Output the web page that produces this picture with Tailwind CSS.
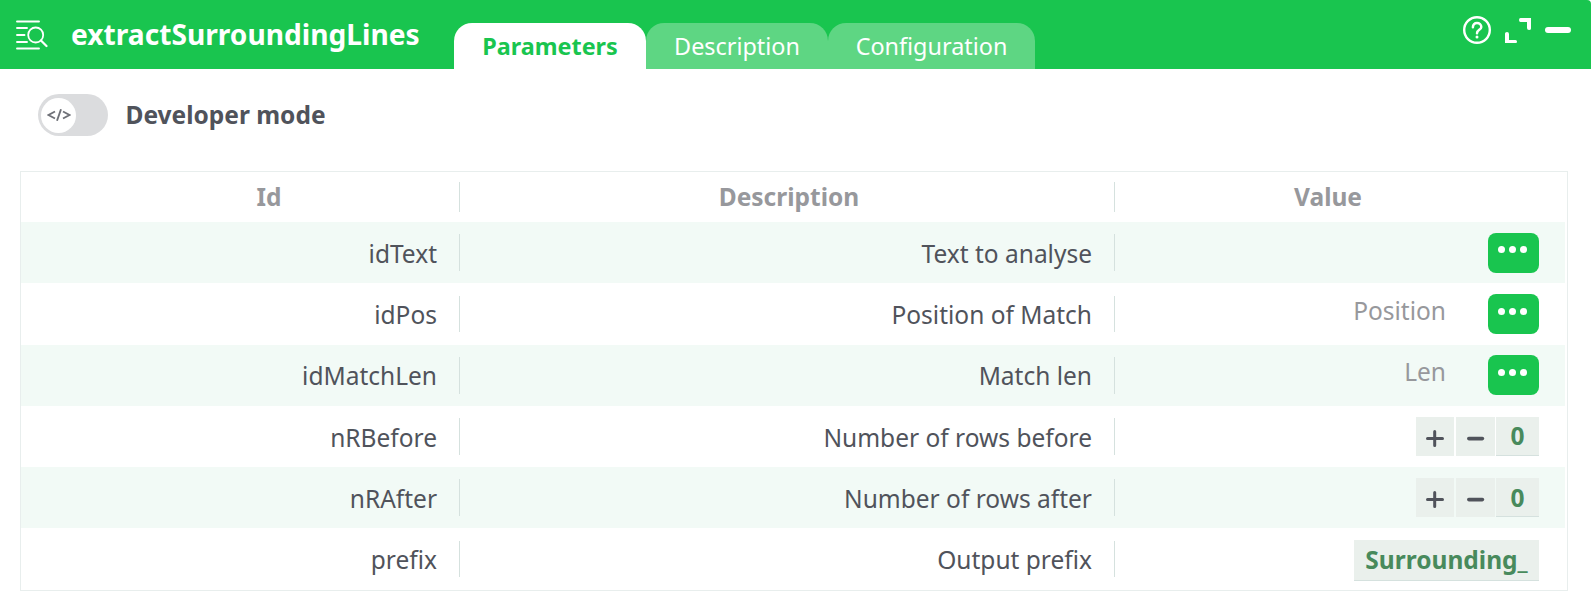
<!DOCTYPE html>
<html lang="en">
<head>
<meta charset="utf-8">
<title>extractSurroundingLines</title>
<script src="https://cdn.jsdelivr.net/npm/@tailwindcss/browser@4"></script>
</head>
<body class="h-[616px] overflow-hidden bg-white font-['Noto_Sans',sans-serif] text-[24.5px] leading-9 text-[#50535b]">
<header class="flex h-[69px] justify-between rounded-tr-[4px] bg-[#19c54f] text-white">
  <div class="flex">
    <svg class="mt-[19px] ml-4 h-8 w-8 shrink-0" viewBox="0 0 32 32" fill="none" stroke="currentColor" stroke-width="2" stroke-linecap="round"><path d="M1 2.5H23M1 9H11M1 16H8.500M1 23H11M1 29.500H23" stroke-width="1.900"/><circle cx="19.700" cy="16" r="7.500" stroke-width="1.800"/><path d="M25 21.500L30.500 27" stroke-width="2.200"/></svg>
    <h1 class="mt-[14px] ml-[23px] w-[383px] text-[28.175px] leading-10 font-bold whitespace-nowrap">extractSurroundingLines</h1>
    <nav class="mt-[23px] flex text-[23.4px] leading-[46px]">
      <div class="w-48 rounded-t-[18px] bg-white text-center font-bold text-[#19c54f]">Parameters</div>
      <div class="w-[182px] rounded-t-[18px] bg-[#5ed683] text-center">Description</div>
      <div class="w-[207px] rounded-t-[18px] bg-[#5ed683] text-center">Configuration</div>
    </nav>
  </div>
  <div class="mt-4 mr-5 flex">
    <svg class="h-7 w-7" viewBox="0 0 28 28" fill="none" stroke="currentColor"><circle cx="14" cy="14" r="12.800" stroke-width="2.400"/><path d="M9.900 11.300C9.900 8.600 11.600 7.100 14 7.100S18.300 8.700 18.300 10.900C18.300 13.900 14 13.800 14 17.200" stroke-width="2.500" stroke-linecap="round"/><circle cx="14" cy="21" r="1.500" fill="currentColor" stroke="none"/></svg>
    <svg class="mt-0.5 ml-[14px] h-[25px] w-[26px]" viewBox="0 0 26 25" fill="currentColor"><path d="M15.500 0H26V10.500Q26 12 24 12Q22 12 22 10V4H15.500Q14 4 14 2Q14 0 15.500 0Z"/><path d="M0 25V15.500Q0 14 2 14Q4 14 4 16V22H10.500Q12 22 12 23.500Q12 25 11 25Z"/></svg>
    <div class="mt-[11px] ml-[14px] h-[6px] w-[26px] rounded-full bg-white"></div>
  </div>
</header>

<div class="mt-[25px] ml-[38px] flex h-[42px] items-center">
  <div class="flex h-[42px] w-[70px] items-center rounded-full bg-[#dbdcde] pl-[3px]">
    <div class="flex h-[35px] w-[35px] items-center justify-center rounded-full bg-white">
      <svg class="h-3 w-6" viewBox="0 0 24 12" fill="none" stroke="#6f7178" stroke-width="1.900"><path d="M8 2.500L1.500 6L8 9.500M14 0.300L10 11.700M16 2.500L22.500 6L16 9.500"/></svg>
    </div>
  </div>
  <div class="ml-[17.5px] font-bold">Developer mode</div>
</div>

<main class="mt-[35px] ml-5 flex h-[420px] w-[1548px] flex-col border border-[#e8eeed] pr-0.5">
  <div class="flex h-[50px] items-start pt-[10px] text-center leading-[30px] font-bold text-[#97989c]">
    <div class="flex w-[439px] items-center"><span class="grow pl-[58px]">Id</span><i class="h-[30px] w-px bg-[#d5e1de]"></i></div>
    <div class="flex w-[655px] items-center"><span class="grow pl-1">Description</span><i class="h-[30px] w-px bg-[#d5e1de]"></i></div>
    <div class="grow pr-6">Value</div>
  </div>
  <div class="flex h-[61px] items-center bg-[#f2faf6]">
    <div class="flex w-[439px] items-center justify-end"><span class="pt-[2px]">idText</span><i class="ml-[22px] h-[37px] w-px bg-[#d5e1de]"></i></div>
    <div class="flex w-[655px] items-center justify-end"><span class="pt-[2px]">Text to analyse</span><i class="ml-[22px] h-[37px] w-px bg-[#d5e1de]"></i></div>
    <div class="flex grow justify-end pr-[26px]"><div class="mt-px flex h-10 w-[51px] justify-center gap-[3.5px] rounded-[8px] bg-[#19c54f] pt-[12.500px] pr-[2px]"><b class="h-[7.300px] w-[7.300px] rounded-full bg-white"></b><b class="h-[7.300px] w-[7.300px] rounded-full bg-white"></b><b class="h-[7.300px] w-[7.300px] rounded-full bg-white"></b></div></div>
  </div>
  <div class="flex h-[62px] items-center">
    <div class="flex w-[439px] items-center justify-end"><span class="pt-px">idPos</span><i class="ml-[22px] h-9 w-px bg-[#d5e1de]"></i></div>
    <div class="flex w-[655px] items-center justify-end"><span class="pt-px">Position of Match</span><i class="ml-[22px] h-9 w-px bg-[#d5e1de]"></i></div>
    <div class="flex grow items-center justify-end pr-[26px]"><span class="mr-[42px] pb-[6px] text-[#97989c]">Position</span><div class="flex h-10 w-[51px] justify-center gap-[3.5px] rounded-[8px] bg-[#19c54f] pt-[13.500px] pr-[2px]"><b class="h-[7.300px] w-[7.300px] rounded-full bg-white"></b><b class="h-[7.300px] w-[7.300px] rounded-full bg-white"></b><b class="h-[7.300px] w-[7.300px] rounded-full bg-white"></b></div></div>
  </div>
  <div class="flex h-[61px] items-center bg-[#f2faf6]">
    <div class="flex w-[439px] items-center justify-end"><span class="pt-px">idMatchLen</span><i class="ml-[22px] h-[37px] w-px bg-[#d5e1de]"></i></div>
    <div class="flex w-[655px] items-center justify-end"><span class="pt-px">Match len</span><i class="ml-[22px] h-[37px] w-px bg-[#d5e1de]"></i></div>
    <div class="flex grow items-center justify-end pr-[26px]"><span class="mr-[42px] pb-[7px] text-[#97989c]">Len</span><div class="mb-px flex h-10 w-[51px] justify-center gap-[3.5px] rounded-[8px] bg-[#19c54f] pt-[14px] pr-[2px]"><b class="h-[7.300px] w-[7.300px] rounded-full bg-white"></b><b class="h-[7.300px] w-[7.300px] rounded-full bg-white"></b><b class="h-[7.300px] w-[7.300px] rounded-full bg-white"></b></div></div>
  </div>
  <div class="flex h-[61px] items-center">
    <div class="flex w-[439px] items-center justify-end"><span class="pt-[2px]">nRBefore</span><i class="ml-[22px] h-[37px] w-px bg-[#d5e1de]"></i></div>
    <div class="flex w-[655px] items-center justify-end"><span class="pt-[2px]">Number of rows before</span><i class="ml-[22px] h-[37px] w-px bg-[#d5e1de]"></i></div>
    <div class="flex grow justify-end pr-[26px]">
      <div class="flex h-[39px] w-[38px] bg-[#eaf0ec] pt-[13px] pl-[10px]"><svg class="h-[18px] w-[18px]" viewBox="0 0 18 18" stroke="#50535b" stroke-width="3" stroke-linecap="round"><path d="M1.500 8.500H16.500M8.700 1.500V15.500"/></svg></div>
      <div class="ml-0.5 flex h-[39px] w-[39px] bg-[#eaf0ec] pt-[13px] pl-[11px]"><svg class="h-[18px] w-[18px]" viewBox="0 0 18 18" stroke="#50535b" stroke-width="3.600" stroke-linecap="round"><path d="M1.800 8.600H15.400"/></svg></div>
      <div class="ml-px h-[39px] w-[43px] border-b border-[#d5e1de] bg-[#eaf0ec] text-center leading-[37px] font-bold text-[#488a5c]">0</div>
    </div>
  </div>
  <div class="flex h-[61px] items-center bg-[#f2faf6]">
    <div class="flex w-[439px] items-center justify-end"><span class="pt-[2px]">nRAfter</span><i class="ml-[22px] h-[37px] w-px bg-[#d5e1de]"></i></div>
    <div class="flex w-[655px] items-center justify-end"><span class="pt-[2px]">Number of rows after</span><i class="ml-[22px] h-[37px] w-px bg-[#d5e1de]"></i></div>
    <div class="flex grow justify-end pr-[26px]">
      <div class="flex h-[39px] w-[38px] bg-[#eaf0ec] pt-[13px] pl-[10px]"><svg class="h-[18px] w-[18px]" viewBox="0 0 18 18" stroke="#50535b" stroke-width="3" stroke-linecap="round"><path d="M1.500 8.500H16.500M8.700 1.500V15.500"/></svg></div>
      <div class="ml-0.5 flex h-[39px] w-[39px] bg-[#eaf0ec] pt-[13px] pl-[11px]"><svg class="h-[18px] w-[18px]" viewBox="0 0 18 18" stroke="#50535b" stroke-width="3.600" stroke-linecap="round"><path d="M1.800 8.600H15.400"/></svg></div>
      <div class="ml-px h-[39px] w-[43px] border-b border-[#d5e1de] bg-[#eaf0ec] text-center leading-[39px] font-bold text-[#488a5c]">0</div>
    </div>
  </div>
  <div class="flex h-[62px] items-center">
    <div class="flex w-[439px] items-center justify-end"><span class="pt-px">prefix</span><i class="ml-[22px] h-9 w-px bg-[#d5e1de]"></i></div>
    <div class="flex w-[655px] items-center justify-end"><span class="pt-px">Output prefix</span><i class="ml-[22px] h-9 w-px bg-[#d5e1de]"></i></div>
    <div class="flex grow justify-end pr-[26px]"><div class="mt-[3px] h-[41px] w-[185px] border-b border-[#d5e1de] bg-[#eaf0ec] text-center leading-[39px] font-bold text-[#488a5c]">Surrounding_</div></div>
  </div>
</main>
</body>
</html>
